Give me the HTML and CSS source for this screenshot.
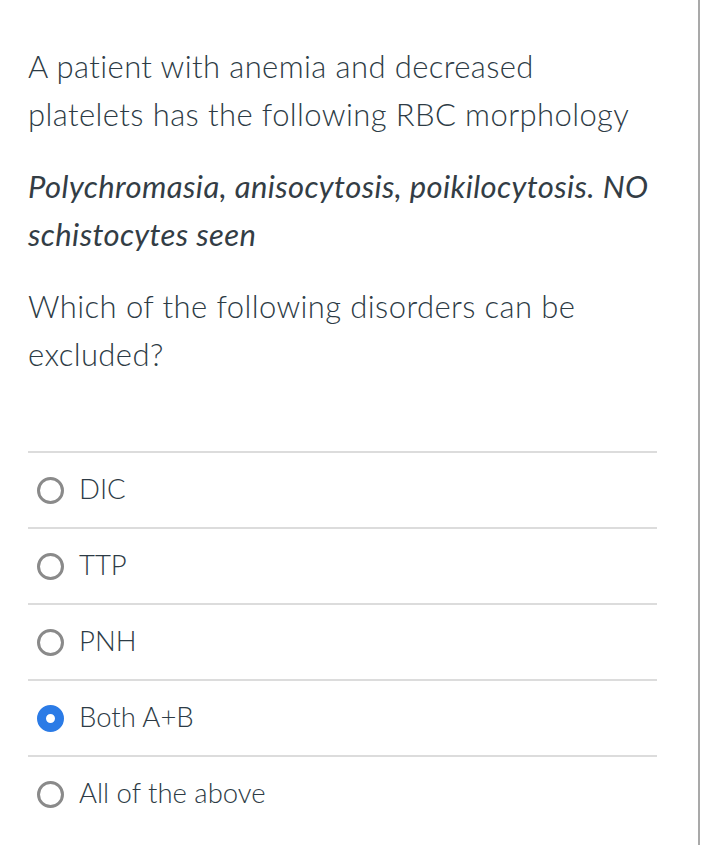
FILE: index.html
```html
<!DOCTYPE html>
<html>
<head>
<meta charset="utf-8">
<link rel="stylesheet" href="styles.css">
</head>
<body>
<div class="page">
  <div class="question">
    <p class="text">A patient with anemia and decreased platelets has the following RBC morphology</p>
    <p class="text em">Polychromasia, anisocytosis, poikilocytosis. NO schistocytes seen</p>
    <p class="text">Which of the following disorders can be excluded?</p>
  </div>
  <div class="answers">
    <div class="answer"><span class="radio"></span><span class="label">DIC</span></div>
    <div class="answer"><span class="radio"></span><span class="label">TTP</span></div>
    <div class="answer"><span class="radio"></span><span class="label">PNH</span></div>
    <div class="answer"><span class="radio checked"></span><span class="label">Both A+B</span></div>
    <div class="answer"><span class="radio"></span><span class="label">All of the above</span></div>
  </div>
</div>
</body>
</html>
```
FILE: styles.css
```css
html, body {
  margin: 0;
  padding: 0;
  background: #fff;
}
body {
  font-family: Lato, "Open Sans", sans-serif;
  color: #2d3b45;
}
.page {
  width: 698px;
  min-height: 845px;
  border-right: 2px solid #a9a9a9;
  box-sizing: content-box;
}
.question {
  padding: 43px 40px 0 28px;
}
.text {
  margin: 0 0 25px 0;
  font-size: 31px;
  line-height: 47.5px;
  letter-spacing: 0.4px;
  font-weight: 300;
  color: #2d3b45;
}
.text.em {
  font-style: italic;
  font-weight: 400;
  letter-spacing: 0.4px;
  color: #333d45;
}
.answers {
  margin: 73px 41px 0 28px;
}
.answer {
  display: flex;
  align-items: center;
  height: 74px;
  border-top: 2px solid #dcdcdc;
}
.radio {
  width: 21px;
  height: 21px;
  border: 3px solid #8a8a8a;
  border-radius: 50%;
  margin-left: 9px;
  margin-right: 15px;
  box-sizing: content-box;
  flex: none;
}
.radio.checked {
  width: 9px;
  height: 9px;
  border: 9px solid #2b7be6;
  background: #fff;
}
.label {
  font-size: 27.5px;
  font-weight: 300;
  color: #2d3b45;
  padding-bottom: 4px;
}
```
